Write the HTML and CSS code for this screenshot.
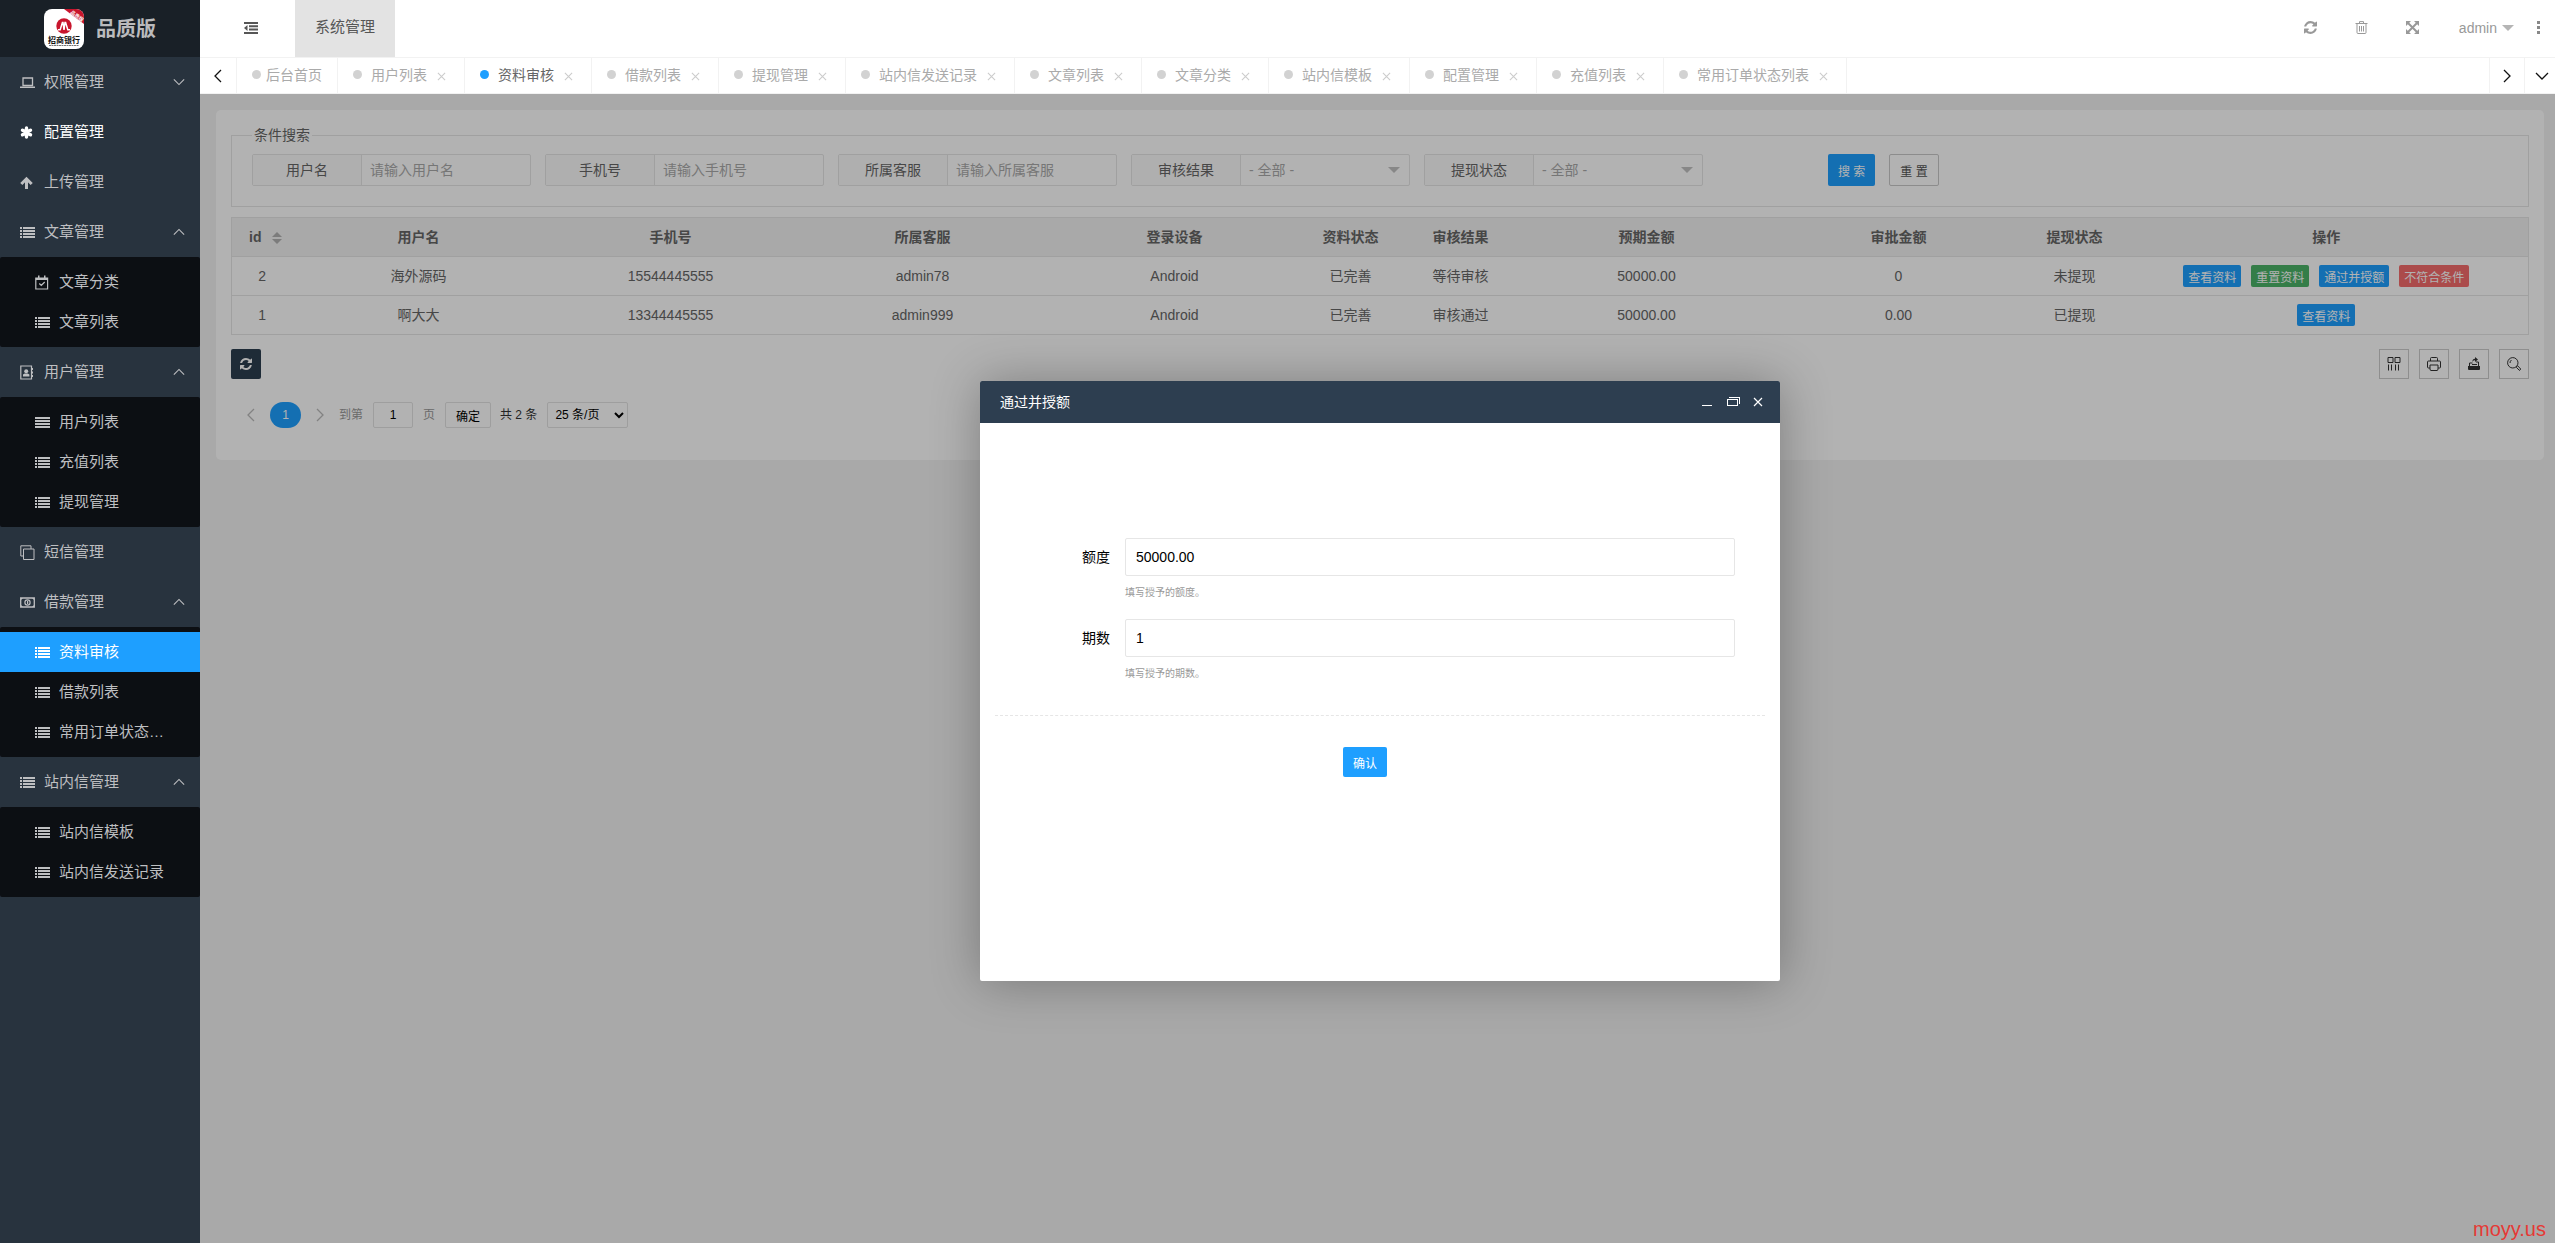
FILE: index.html
```
<!DOCTYPE html>
<html lang="zh-CN">
  <head>
    <meta charset="UTF-8" />
    <meta name="viewport" content="width=device-width, initial-scale=1.0" />
    <title>品质版</title>
    <link rel="stylesheet" href="styles.css">
  </head>
  <body>
    <!-- icon sprite -->
    <svg class="sprite" aria-hidden="true">
      <symbol id="i-refresh" viewBox="0 128 1536 1536"><path fill="currentColor" d="M1511 1056q0 5-1 7-64 268-268 434.500t-478 166.500q-146 0-282.500-55t-243.500-157l-129 129q-19 19-45 19t-45-19-19-45v-448q0-26 19-45t45-19h448q26 0 45 19t19 45-19 45l-137 137q71 66 161 102t187 36q134 0 250-65t186-179q11-17 53-117 8-23 30-23h192q13 0 22.500 9.500t9.500 22.500zm25-800v448q0 26-19 45t-45 19h-448q-26 0-45-19t-19-45 19-45l138-138q-148-137-349-137-134 0-250 65t-186 179q-11 17-53 117-8 23-30 23h-199q-13 0-22.500-9.500t-9.500-22.500v-7q65-268 270-434.500t480-166.500q146 0 284 55.500t245 156.500l130-129q19-19 45-19t45 19 19 45z"/></symbol>
      <symbol id="i-list" viewBox="0 0 15 15"><path fill="currentColor" d="M0 2h2v2H0zM3 2h12v2H3zM0 5h2v2H0zM3 5h12v2H3zM0 8h2v2H0zM3 8h12v2H3zM0 11h2v2H0zM3 11h12v2H3z"/></symbol>
      <symbol id="i-align" viewBox="0 0 15 15"><path fill="currentColor" d="M0 2h15v2H0zM0 5h15v2H0zM0 8h15v2H0zM0 11h15v2H0z"/></symbol>
      <symbol id="i-laptop" viewBox="0 0 15 15"><path fill="none" stroke="currentColor" stroke-width="1.300" d="M3 3h9.500v7.500H3z"/><path fill="currentColor" d="M0 11.500h15v1.500H0z"/></symbol>
      <symbol id="i-asterisk" viewBox="0 0 15 15"><path stroke="currentColor" stroke-width="3.400" stroke-linecap="round" d="M6.500 3v9M2.500 5.200l8 4.600M10.500 5.200l-8 4.600"/></symbol>
      <symbol id="i-up" viewBox="0 0 15 15"><path fill="none" stroke="currentColor" stroke-width="3" d="M6.500 14V4M1.300 9l5.200-5.200L11.700 9"/></symbol>
      <symbol id="i-calendar" viewBox="0 0 15 15"><path fill="none" stroke="currentColor" stroke-width="1.200" d="M.8 3h11.800v11H.8zM4.300 8.500l2 2 3.400-3.500"/><path fill="currentColor" d="M.8 3h11.800v2H.8zM3 .5h1.500v3H3zM9 .5h1.500v3H9z"/></symbol>
      <symbol id="i-book" viewBox="0 0 15 15"><path fill="none" stroke="currentColor" stroke-width="1.200" d="M.8 1h10.700v13H.8z"/><path fill="currentColor" d="M12 3h1v2h-1zM12 6.500h1v2h-1zM12 10h1v2h-1zM3 11.500V9.500l1.700-1h3l1.700 1v2z"/><circle cx="6.200" cy="6.200" r="2" fill="currentColor"/></symbol>
      <symbol id="i-clone" viewBox="0 0 15 15"><path fill="none" stroke="currentColor" d="M3.500 4h10.500v10.500H3.500zM3.500 11H.8V.8H11V4"/></symbol>
      <symbol id="i-money" viewBox="0 0 15 15"><path fill="none" stroke="currentColor" stroke-width="1.300" d="M.7 3h13.600v9H.7z"/><circle cx="7.500" cy="7.500" r="2.600" fill="none" stroke="currentColor" stroke-width="1.200"/><path fill="currentColor" d="M7 6h1.200v3H7zM1 3h2L1 5zM14 3v2l-2-2zM1 12v-2l2 2zM14 12h-2l2-2z"/></symbol>
      <symbol id="i-outdent" viewBox="0 0 14 12"><path fill="currentColor" d="M0 0h14v2H0zM5 3.300h9v2H5zM5 6.600h9v2H5zM0 10h14v2H0zM0 6l3.500-3v6z"/></symbol>
      <symbol id="i-trash" viewBox="0 0 12 13"><path fill="none" stroke="currentColor" d="M0 2.500h12M4 2V.6h4V2M1.500 3v8.500q0 1 1 1h7q1 0 1-1V3M4 5v5.500M6 5v5.500M8 5v5.500"/></symbol>
      <symbol id="i-expand" viewBox="0 0 13 13"><path stroke="currentColor" stroke-width="2" d="M2 2l9 9M11 2l-9 9"/><path fill="currentColor" d="M0 0h5L0 5zM13 0v5L8 0zM0 13V8l5 5zM13 13H8l5-5z"/></symbol>
      <symbol id="i-down" viewBox="0 0 14 14"><path fill="none" stroke="currentColor" stroke-width="1.300" d="M1 4l6 6 6-6"/></symbol>
      <symbol id="i-top" viewBox="0 0 14 14"><path fill="none" stroke="currentColor" stroke-width="1.300" d="M1 10l6-6 6 6"/></symbol>
      <symbol id="i-left" viewBox="0 0 14 14"><path fill="none" stroke="currentColor" stroke-width="1.300" d="M10 1L4 7l6 6"/></symbol>
      <symbol id="i-right" viewBox="0 0 14 14"><path fill="none" stroke="currentColor" stroke-width="1.300" d="M4 1l6 6-6 6"/></symbol>
      <symbol id="i-close" viewBox="0 0 10 10"><path fill="none" stroke="currentColor" stroke-width="1.200" d="M1 1l8 8M9 1l-8 8"/></symbol>
      <symbol id="i-cols" viewBox="0 0 14 14"><path fill="none" stroke="currentColor" d="M1 .5h5v5H1zM8 .5h5v5H8zM1.500 7.500v6M4.500 7.500v6M8.500 7.500v6M11.500 7.500v6"/></symbol>
      <symbol id="i-print" viewBox="0 0 14 14"><path fill="none" stroke="currentColor" d="M3.500 4V1.500q0-1 1-1h5q1 0 1 1V4M3 11H1.500q-1 0-1-1V5q0-1 1-1h11q1 0 1 1v5q0 1-1 1H11M3 8h8v4q0 1.500-1 1.500H4q-1 0-1-1.500z"/></symbol>
      <symbol id="i-export" viewBox="0 0 14 14"><path fill="currentColor" d="M1 9h12v3q0 1-1 1H2q-1 0-1-1zM8 0l3 2.500L8 5V3.300Q6 3 5.500 5 5 2 8 1.700z"/><path fill="none" stroke="currentColor" d="M2.500 9V6h3M11.500 9V5H9M5 7.500h5"/></symbol>
      <symbol id="i-search" viewBox="0 0 14 14"><circle cx="5.800" cy="5.800" r="5.200" fill="none" stroke="currentColor"/><path fill="none" stroke="currentColor" d="M9.500 9.500l1.200-.7 3 3.200-1.200 1.500-3-3zM3 6q0-2 1.500-3"/></symbol>
    </svg>

    <aside class="sidebar">
      <a class="logo" href="#">
        <svg class="logo-img" viewBox="0 0 40 40" aria-hidden="true">
          <defs><clipPath id="logo-clip"><rect width="40" height="40" rx="8"/></clipPath></defs>
          <g clip-path="url(#logo-clip)">
            <rect width="40" height="40" fill="#fff"/>
            <path fill="#c8152d" d="M20 0h20v15z"/>
            <text class="logo-ribbon" transform="translate(26 4) rotate(37)">品质版</text>
            <circle cx="20" cy="17" r="7.700" fill="#c8152d"/>
            <path fill="none" stroke="#fff" stroke-width="1.500" d="M14 20.800h2.200l2.200-7.300h.6l1 7.300 1-7.300h.6l2.200 7.300H26"/>
            <text class="logo-bank" x="20" y="34" text-anchor="middle">招商银行</text>
            <path stroke="#777" stroke-dasharray="2 .5" d="M5 36.500h30"/>
          </g>
        </svg>
        <h1>品质版</h1>
      </a>
      <nav class="menu">
        <a href="#"><svg><use href="#i-laptop"/></svg><span>权限管理</span><svg class="arrow"><use href="#i-down"/></svg></a>
        <a class="hover" href="#"><svg><use href="#i-asterisk"/></svg><span>配置管理</span></a>
        <a href="#"><svg><use href="#i-up"/></svg><span>上传管理</span></a>
        <a href="#"><svg><use href="#i-list"/></svg><span>文章管理</span><svg class="arrow"><use href="#i-top"/></svg></a>
        <div class="submenu">
          <a href="#"><svg><use href="#i-calendar"/></svg><span>文章分类</span></a>
          <a href="#"><svg><use href="#i-list"/></svg><span>文章列表</span></a>
        </div>
        <a href="#"><svg><use href="#i-book"/></svg><span>用户管理</span><svg class="arrow"><use href="#i-top"/></svg></a>
        <div class="submenu">
          <a href="#"><svg><use href="#i-align"/></svg><span>用户列表</span></a>
          <a href="#"><svg><use href="#i-list"/></svg><span>充值列表</span></a>
          <a href="#"><svg><use href="#i-list"/></svg><span>提现管理</span></a>
        </div>
        <a href="#"><svg><use href="#i-clone"/></svg><span>短信管理</span></a>
        <a href="#"><svg><use href="#i-money"/></svg><span>借款管理</span><svg class="arrow"><use href="#i-top"/></svg></a>
        <div class="submenu">
          <a class="active" href="#"><svg><use href="#i-list"/></svg><span>资料审核</span></a>
          <a href="#"><svg><use href="#i-list"/></svg><span>借款列表</span></a>
          <a href="#"><svg><use href="#i-list"/></svg><span>常用订单状态列表</span></a>
        </div>
        <a href="#"><svg><use href="#i-list"/></svg><span>站内信管理</span><svg class="arrow"><use href="#i-top"/></svg></a>
        <div class="submenu">
          <a href="#"><svg><use href="#i-list"/></svg><span>站内信模板</span></a>
          <a href="#"><svg><use href="#i-list"/></svg><span>站内信发送记录</span></a>
        </div>
      </nav>
    </aside>

    <div class="main">
      <header class="header">
        <button class="fold" aria-label="折叠"><svg><use href="#i-outdent"/></svg></button>
        <a class="module" href="#">系统管理</a>
        <div class="header-right">
          <button aria-label="刷新"><svg><use href="#i-refresh"/></svg></button>
          <button aria-label="清理"><svg><use href="#i-trash"/></svg></button>
          <button aria-label="全屏"><svg><use href="#i-expand"/></svg></button>
          <a class="user" href="#">admin<i class="caret"></i></a>
          <button class="more" aria-label="更多"><i></i><i></i><i></i></button>
        </div>
      </header>

      <div class="tabs">
        <button class="tab-ctrl" aria-label="向左"><svg><use href="#i-left"/></svg></button>
        <ul>
          <li class="home"><i></i><a href="#">后台首页</a></li>
          <li><i></i><a href="#">用户列表</a><svg><use href="#i-close"/></svg></li>
          <li class="active"><i></i><a href="#">资料审核</a><svg><use href="#i-close"/></svg></li>
          <li><i></i><a href="#">借款列表</a><svg><use href="#i-close"/></svg></li>
          <li><i></i><a href="#">提现管理</a><svg><use href="#i-close"/></svg></li>
          <li><i></i><a href="#">站内信发送记录</a><svg><use href="#i-close"/></svg></li>
          <li><i></i><a href="#">文章列表</a><svg><use href="#i-close"/></svg></li>
          <li><i></i><a href="#">文章分类</a><svg><use href="#i-close"/></svg></li>
          <li><i></i><a href="#">站内信模板</a><svg><use href="#i-close"/></svg></li>
          <li><i></i><a href="#">配置管理</a><svg><use href="#i-close"/></svg></li>
          <li><i></i><a href="#">充值列表</a><svg><use href="#i-close"/></svg></li>
          <li><i></i><a href="#">常用订单状态列表</a><svg><use href="#i-close"/></svg></li>
        </ul>
        <button class="tab-ctrl tab-next" aria-label="向右"><svg><use href="#i-right"/></svg></button>
        <button class="tab-ctrl tab-menu" aria-label="更多"><svg><use href="#i-down"/></svg></button>
      </div>

      <main class="page">
        <div class="card">
          <fieldset class="search">
            <legend>条件搜索</legend>
            <form class="search-form">
              <div class="field">
                <label for="username">用户名</label>
                <input type="text" id="username" placeholder="请输入用户名" />
              </div>
              <div class="field">
                <label for="phone">手机号</label>
                <input type="text" id="phone" placeholder="请输入手机号" />
              </div>
              <div class="field">
                <label for="service">所属客服</label>
                <input type="text" id="service" placeholder="请输入所属客服" />
              </div>
              <div class="field field-select">
                <label for="result">审核结果</label>
                <select id="result"><option>- 全部 -</option></select>
              </div>
              <div class="field field-select">
                <label for="withdraw">提现状态</label>
                <select id="withdraw"><option>- 全部 -</option></select>
              </div>
              <div class="search-btns">
                <button type="button" class="btn">搜 索</button>
                <button type="reset" class="btn btn-primary">重 置</button>
              </div>
            </form>
          </fieldset>

          <table class="list">
            <colgroup>
              <col class="w-id" /><col /><col /><col /><col /><col class="w-status" />
              <col class="w-result" /><col /><col /><col class="w-status" /><col class="w-ops" />
            </colgroup>
            <thead>
              <tr>
                <th class="sortable">id<span class="sort"><i class="asc"></i><i class="desc"></i></span></th>
                <th>用户名</th>
                <th>手机号</th>
                <th>所属客服</th>
                <th>登录设备</th>
                <th>资料状态</th>
                <th>审核结果</th>
                <th>预期金额</th>
                <th>审批金额</th>
                <th>提现状态</th>
                <th>操作</th>
              </tr>
            </thead>
            <tbody>
              <tr>
                <td>2</td>
                <td>海外源码</td>
                <td>15544445555</td>
                <td>admin78</td>
                <td>Android</td>
                <td>已完善</td>
                <td>等待审核</td>
                <td>50000.00</td>
                <td>0</td>
                <td>未提现</td>
                <td>
                  <div class="ops">
                    <button class="btn-xs">查看资料</button>
                    <button class="btn-xs btn-success">重置资料</button>
                    <button class="btn-xs">通过并授额</button>
                    <button class="btn-xs btn-danger">不符合条件</button>
                  </div>
                </td>
              </tr>
              <tr>
                <td>1</td>
                <td>啊大大</td>
                <td>13344445555</td>
                <td>admin999</td>
                <td>Android</td>
                <td>已完善</td>
                <td>审核通过</td>
                <td>50000.00</td>
                <td>0.00</td>
                <td>已提现</td>
                <td>
                  <div class="ops">
                    <button class="btn-xs">查看资料</button>
                  </div>
                </td>
              </tr>
            </tbody>
          </table>

          <div class="toolbar">
            <button class="reload" aria-label="刷新"><svg><use href="#i-refresh"/></svg></button>
            <div class="tools">
              <button aria-label="筛选列"><svg><use href="#i-cols"/></svg></button>
              <button aria-label="打印"><svg><use href="#i-print"/></svg></button>
              <button aria-label="导出"><svg><use href="#i-export"/></svg></button>
              <button aria-label="搜索"><svg><use href="#i-search"/></svg></button>
            </div>
          </div>

          <div class="pager">
            <a class="step" href="#" aria-label="上一页"><svg><use href="#i-left"/></svg></a>
            <a class="current" href="#">1</a>
            <a class="step" href="#" aria-label="下一页"><svg><use href="#i-right"/></svg></a>
            <label for="pageNo">到第</label>
            <input type="text" id="pageNo" value="1" />
            <span class="unit">页</span>
            <button type="button">确定</button>
            <span class="count">共 2 条</span>
            <select aria-label="每页条数"><option>25 条/页</option></select>
          </div>
        </div>

        <div class="shade">
          <div class="dialog" role="dialog" aria-labelledby="dialogTitle">
            <div class="dialog-title">
              <h2 id="dialogTitle">通过并授额</h2>
              <button class="min" aria-label="最小化"></button>
              <button class="max" aria-label="最大化"></button>
              <button aria-label="关闭"><svg><use href="#i-close"/></svg></button>
            </div>
            <form class="dialog-form">
              <div class="item">
                <label for="quota">额度</label>
                <input type="text" id="quota" value="50000.00" />
                <p>填写授予的额度。</p>
              </div>
              <div class="item">
                <label for="periods">期数</label>
                <input type="text" id="periods" value="1" />
                <p>填写授予的期数。</p>
              </div>
              <hr />
              <button type="button" class="btn btn-sm">确认</button>
            </form>
          </div>
        </div>
        <span class="watermark">moyy.us</span>
      </main>
    </div>
  </body>
</html>
```
FILE: styles.css
```
* {
  box-sizing: border-box;
}
body {
  display: flex;
  min-height: 100vh;
  margin: 0;
  font-family: "Liberation Sans", "Noto Sans CJK SC", sans-serif;
  font-size: 14px;
  line-height: 24px;
  color: #666;
  background: #f2f2f2;
}
a {
  color: inherit;
  text-decoration: none;
}
i {
  font-style: normal;
}
button,
input,
select {
  margin: 0;
  padding: 0;
  font-family: inherit;
  font-size: 14px;
  color: inherit;
  border: 0;
  border-radius: 2px;
  background: none;
}
button {
  display: flex;
  align-items: center;
  justify-content: center;
  cursor: pointer;
}
.sprite {
  position: absolute;
  width: 0;
  height: 0;
}

/* sidebar */
.sidebar {
  flex: none;
  width: 200px;
  background: #28333e;
}
.logo {
  display: flex;
  align-items: center;
  justify-content: center;
  gap: 12px;
  height: 57px;
  background: #192027;
}
.logo-img {
  width: 40px;
  height: 40px;
}
.logo-bank {
  font-size: 8px;
  font-weight: bold;
  fill: #111;
}
.logo-ribbon {
  font-size: 5px;
  font-weight: bold;
  fill: #fff;
}
.logo h1 {
  margin: 0;
  font-size: 20px;
  color: #bababc;
}
.menu a {
  display: flex;
  align-items: center;
  height: 50px;
  padding: 0 15px 0 20px;
  font-size: 15px;
  color: #bebfc1;
}
.menu svg {
  flex: none;
  width: 15px;
  height: 15px;
  margin-right: 9px;
}
.menu span {
  overflow: hidden;
  white-space: nowrap;
  text-overflow: ellipsis;
}
.menu .arrow {
  width: 12px;
  height: 12px;
  margin: 0 0 0 auto;
}
.menu .hover {
  color: #fff;
}
.submenu {
  padding: 5px 0;
  border-radius: 2px;
  background: #0c0f13;
}
.menu .submenu a {
  height: 40px;
  padding: 0 35px;
}
.menu .submenu .active {
  color: #fff;
  background: #1e9fff;
}

/* header */
.main {
  display: flex;
  flex: 1;
  flex-direction: column;
  min-width: 0;
}
.header {
  display: flex;
  height: 57px;
  background: #fff;
}
.header .fold {
  width: 95px;
  padding: 0 0 2px 7px;
  color: #565656;
}
.fold svg {
  width: 14px;
  height: 12px;
}
.module {
  padding: 0 20px;
  font-size: 15px;
  line-height: 54px;
  color: #565656;
  background: #e3e3e3;
}
.header-right {
  display: flex;
  align-items: center;
  margin-left: auto;
  padding: 0 15px 2px 0;
  color: #999;
}
.header-right button {
  width: 51px;
  height: 50px;
}
.header-right svg {
  width: 13px;
  height: 13px;
}
.user {
  display: flex;
  align-items: center;
  gap: 5px;
  margin-left: 21px;
}
.caret {
  border: 6px solid transparent;
  border-top-color: #b5b5b5;
  border-bottom: 0;
}
.header-right .more {
  flex-direction: column;
  gap: 2px;
  width: 4px;
  margin-left: 22px;
}
.more i {
  width: 3px;
  height: 3px;
  background: #888;
}

/* tabs */
.tabs {
  display: flex;
  height: 37px;
  border-top: 1px solid #f2f2f2;
  border-bottom: 1px solid #f2f2f2;
  background: #fff;
}
.tab-ctrl {
  width: 37px;
  color: #111;
  border-right: 1px solid #f2f2f2;
  border-radius: 0;
}
.tab-ctrl svg {
  width: 14px;
  height: 14px;
}
.tab-next {
  width: 36px;
  border-left: 1px solid #f2f2f2;
}
.tab-menu {
  width: 30px;
  padding-left: 4px;
  border: 0;
}
.tabs ul {
  display: flex;
  flex: 1;
  min-width: 0;
  margin: 0;
  padding: 0;
  overflow: hidden;
  list-style: none;
}
.tabs li {
  display: flex;
  flex: none;
  align-items: center;
  padding: 0 18px 2px 15px;
  color: #aaa;
  border-right: 1px solid #f2f2f2;
}
.tabs li i {
  width: 9px;
  height: 9px;
  margin-right: 9px;
  border-radius: 50%;
  background: #d2d2d2;
}
.tabs .home {
  padding-right: 15px;
}
.tabs .home i {
  margin-right: 5px;
}
.tabs li svg {
  width: 9px;
  height: 9px;
  margin: 3px 0 0 10px;
  color: #ccc;
}
.tabs .active {
  color: #666;
}
.tabs .active i {
  background: #1e9fff;
}

/* page */
.page {
  position: relative;
  flex: 1;
  padding: 16px 11px 16px 16px;
}
.card {
  padding: 15px 15px 32px;
  border-radius: 5px;
  background: #fff;
}
.search {
  min-width: 0;
  margin: 0;
  padding: 9px 20px 20px;
  border: 1px solid #e6e6e6;
}
.search legend {
  padding: 0 2px;
  font-size: 14px;
  line-height: 20px;
}
.search-form {
  display: flex;
  gap: 14px;
}
.field {
  position: relative;
  display: flex;
  width: 279px;
  height: 32px;
  border: 1px solid #e6e6e6;
  border-radius: 2px;
}
.field label {
  flex: 0 0 109px;
  line-height: 30px;
  text-align: center;
  border-right: 1px solid #e6e6e6;
  background: #fbfbfb;
}
.field input,
.field select {
  flex: 1;
  min-width: 0;
  padding: 0 8px;
}
.field select {
  appearance: none;
  color: #aaa;
}
.field-select::after {
  content: "";
  position: absolute;
  top: 12px;
  right: 9px;
  border: 6px solid transparent;
  border-top-color: #c2c2c2;
  border-bottom: 0;
}
::placeholder {
  color: #aaa;
}
.search-btns {
  display: flex;
  gap: 14px;
  margin-left: 111px;
}
.btn {
  height: 32px;
  padding: 0 10px;
  font-size: 12px;
  color: #fff;
  background: #1e9fff;
}
.btn-primary {
  color: #555;
  border: 1px solid #c9c9c9;
  background: #fff;
}
.btn-sm {
  height: 30px;
}

.list {
  width: 100%;
  margin-top: 10px;
  border: 1px solid #e6e6e6;
  border-collapse: collapse;
  table-layout: fixed;
}
.list th,
.list td {
  height: 39px;
  padding: 0;
  text-align: center;
  border-bottom: 1px solid #e6e6e6;
}
.list th {
  background: #f2f2f2;
}
.w-id {
  width: 61px;
}
.w-status {
  width: 100px;
}
.w-result {
  width: 120px;
}
.w-ops {
  width: 404px;
}
.list .sortable {
  padding-left: 17px;
  text-align: left;
}
.sort {
  display: inline-flex;
  flex-direction: column;
  gap: 2px;
  margin-left: 11px;
  vertical-align: middle;
}
.sort i {
  border: 5px solid transparent;
}
.sort .asc {
  border-top: 0;
  border-bottom-color: #b2b2b2;
}
.sort .desc {
  border-top-color: #b2b2b2;
  border-bottom: 0;
}
.ops {
  display: flex;
  justify-content: center;
  gap: 10px;
}
.btn-xs {
  height: 22px;
  padding: 0 5px;
  font-size: 12px;
  color: #fff;
  background: #1e9fff;
}
.btn-success {
  background: #4bb368;
}
.btn-danger {
  background: #f56c6c;
}

.toolbar {
  display: flex;
  justify-content: space-between;
  margin-top: 14px;
}
.toolbar button {
  width: 30px;
  height: 30px;
}
.toolbar svg {
  width: 14px;
  height: 14px;
}
.toolbar .reload {
  color: #fff;
  background: #2c3e50;
}
.toolbar .reload svg {
  width: 12px;
  height: 12px;
}
.tools {
  display: flex;
  gap: 10px;
}
.tools button {
  color: #333;
  border: 1px solid #ccc;
  border-radius: 0;
}

.pager {
  display: flex;
  align-items: center;
  height: 26px;
  margin: 23px 0 0 10px;
  font-size: 12px;
}
.pager .step {
  display: flex;
  justify-content: center;
  width: 20px;
  margin-right: 9px;
  color: #bbb;
}
.pager .step svg {
  width: 14px;
  height: 14px;
}
.pager .current {
  width: 31px;
  height: 26px;
  margin-right: 9px;
  line-height: 26px;
  text-align: center;
  color: #fff;
  border-radius: 13px;
  background: #1e9fff;
}
.pager label,
.pager .unit {
  color: #999;
}
.pager input,
.pager button,
.pager select {
  height: 26px;
  font-size: 12px;
  color: #000;
  border: 1px solid #e2e2e2;
}
.pager input {
  width: 40px;
  margin: 0 10px;
  text-align: center;
}
.pager button {
  width: 46px;
  margin: 0 9px 0 10px;
}
.pager .count {
  color: #333;
}
.pager select {
  width: 81px;
  margin-left: 10px;
  padding: 0 3px;
}

/* dialog */
.shade {
  position: absolute;
  inset: 0;
  display: flex;
  align-items: center;
  justify-content: center;
  padding: 25px 0 0 5px;
  overflow: hidden;
  background: rgba(0, 0, 0, 0.3);
}
.dialog {
  width: 800px;
  height: 600px;
  border-radius: 2px;
  background: #fff;
  box-shadow: 1px 1px 50px rgba(0, 0, 0, 0.3);
}
.dialog-title {
  display: flex;
  align-items: center;
  gap: 15px;
  height: 42px;
  padding: 0 17px 0 20px;
  color: #fff;
  border-radius: 2px 2px 0 0;
  background: #2d3e50;
}
.dialog-title h2 {
  flex: 1;
  margin: 0;
  font-size: 14px;
  font-weight: normal;
}
.dialog-title svg {
  width: 10px;
  height: 10px;
}
.min {
  width: 10px;
  height: 8px;
  border-bottom: 1px solid #fff;
  border-radius: 0;
}
.max {
  width: 11px;
  height: 7px;
  border: 1px solid #fff;
  border-radius: 0;
  box-shadow: 1px -1px 0 #2d3e50, 2px -2px 0 #fff;
}
.dialog-form {
  display: flex;
  flex-direction: column;
  padding: 115px 15px 15px;
}
.item {
  display: grid;
  grid-template-rows: 38px 1fr;
  grid-template-columns: 130px 1fr;
  height: 81px;
  padding-right: 30px;
  color: #000;
}
.item label {
  padding-right: 15px;
  line-height: 38px;
  text-align: right;
}
.item input {
  padding: 0 10px;
  border: 1px solid #e6e6e6;
}
.item p {
  grid-column: 2;
  margin: 5px 0 0;
  font-size: 10px;
  color: #999;
}
.dialog-form hr {
  width: 100%;
  margin: 15px 0 31px;
  border: 0;
  border-top: 1px dashed #e6e6e6;
}
.dialog-form .btn {
  align-self: center;
  margin-right: 30px;
}
.watermark {
  position: absolute;
  right: 9px;
  bottom: 2px;
  font-size: 20px;
  color: #e53935;
}
```
